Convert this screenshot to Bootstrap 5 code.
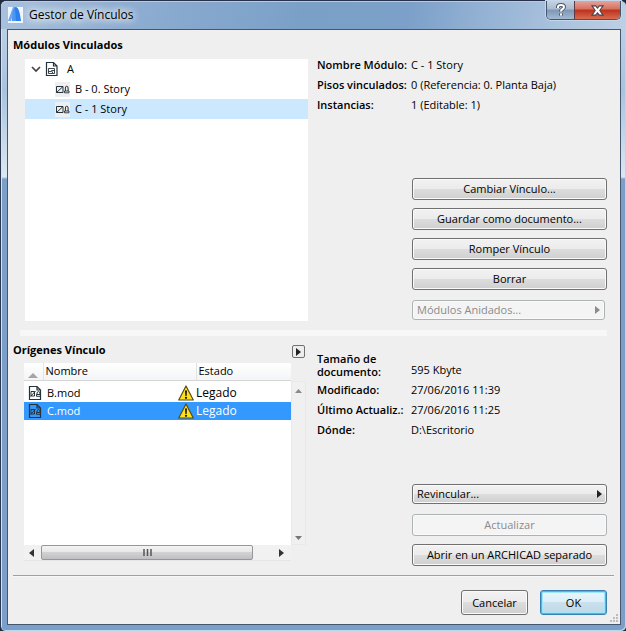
<!DOCTYPE html>
<html lang="es">
<head>
<meta charset="utf-8">
<meta name="viewport" content="width=device-width, initial-scale=1">
<title>Gestor de Vínculos</title>
<link href="https://cdn.jsdelivr.net/npm/bootstrap@5.3.0/dist/css/bootstrap.min.css" rel="stylesheet">
<style>
body{font-family:"Open Sans","Noto Sans",sans-serif;font-size:11px;line-height:20px;color:#000;background:#1f2a3d}
svg{display:block;flex:none}
h1,h2{font-size:11px;line-height:16px;margin:0}
h2{font-weight:700}
.win{min-height:100vh;padding:0 5px 6px 6px;border-top:1px solid #27324a;border-left:1px solid #2c3850;border-radius:6px 6px 5px 5px;
 background:linear-gradient(#c3d5e8 0,#a9c3de 90px,#dce7f2 176px,#7c9fc7 178px,#7b9fc8 100%);box-shadow:inset 1px 1px #d3e3f2,inset -1px -1px #b5d9ea}
.titlebar{height:28px;margin:0 -5px 0 -6px;padding:0 5px 0 6px;border-radius:6px 6px 0 0;background:linear-gradient(100deg,#a9c1dc 0,#8eadd1 20%,#7ba0c8 48%,#7ca0c9 65%,#9db9d8 82%,#bdd0e5 100%);box-shadow:inset 0 1px #b7cce3}
.titlebar h1{font-size:12px;font-weight:400;padding-left:5px;text-shadow:0 0 8px #fff,0 0 8px #fff,0 0 12px #fff}
.caption-buttons{height:19px;border:1px solid #46546b;border-top:0;border-radius:0 0 5px 5px;overflow:hidden;box-shadow:0 0 0 1px #c5d7e9}
.cap{border:0;padding:0;height:18px;display:flex;align-items:center;justify-content:center}
.cap-help{width:27px;background:linear-gradient(#c6d2e1 0,#a9bbd0 45%,#7e96b4 50%,#a4bad3 100%)}
.cap-close{width:46px;border-left:1px solid #5f3b42;background:linear-gradient(#e4a498 0,#d6705e 45%,#bd311b 50%,#d76c50 100%)}
.client{min-height:596px;border:1px solid #45576e;background:#efefef;padding:7px 6px 9px 5px}
.upper{display:grid;grid-template-columns:minmax(0,1fr) 290px;column-gap:9px;padding-right:7px}
.tree{margin:6px 0 0 12px;min-height:262px;background:#fff}
.tree button,.tree .branch{display:flex;align-items:center;width:100%;height:20px;border:0;background:none;padding:0 0 0 30px;color:#000}
.tree .branch{padding-left:6px}
.tree .selected{background:#cce8ff}
.item-ico{background:#efefef;margin-right:5px}
.facts{display:grid;grid-template-columns:94px 1fr;margin:0}
.facts dt,.facts dd{margin:0;line-height:20px;white-space:nowrap}
.facts dt{font-weight:600}
.facts-top{padding-top:18px}
.facts-file{padding-top:8px}
.facts .tall{line-height:13px;white-space:normal;padding:2px 0}
.facts .tall+dd{padding-top:10px}
.winbtn{height:22px;padding:0 4px;font-size:11px;line-height:18px;color:#000;border:1px solid #707070;border-radius:3px;background:linear-gradient(#f2f2f2 0,#ebebeb 49%,#dddddd 50%,#cfcfcf 100%);box-shadow:inset 0 0 0 1px #fafafa}
.winbtn:disabled{opacity:1;color:#8b8b8b;border-color:#adb2b5;background:#f4f4f4}
.short{height:20px}
.actions{width:195px;margin-left:auto;gap:8px}
.actions-top{padding-bottom:1px}
.nested{margin:2px 2px 0 0}
.relink{margin-bottom:2px}
.dialog-btn{width:67px;height:25px}
.default-btn{border-color:#3c7fb1;background:linear-gradient(#eaf6fb 0,#dceef7 49%,#c9e1ee 50%,#c0d8e5 100%);box-shadow:inset 0 0 0 1px #28c8f5,inset 0 0 0 2px #9ee6fa}
.splitter{height:6px;margin:9px 7px 6px 7px;background:#f7f7f7}
.popbtn{width:13px;height:13px;padding:0;margin-right:3px;border:1px solid #707070;border-radius:2px;background:#eee;display:flex;align-items:center;justify-content:center}
.sources{display:grid;grid-template-columns:minmax(0,1fr) 15px;margin:5px 2px 5px 11px}
.filelist{background:#fff;min-height:182px}
.filelist table{width:100%;table-layout:fixed;border-collapse:collapse}
.filelist th{height:17px;line-height:16px;padding:0;font-weight:400;background:linear-gradient(#fff,#f3f4f6);border-bottom:1px solid #d5d5d5}
.filelist th+th{border-left:1px solid #e2e2e2;padding-left:2px}
.filelist td{height:18px;line-height:18px;padding:0}
.filelist tbody::before{content:"";display:block;height:3px}
.filelist .selected{background:#3399ff;color:#fff}
.status-text{font-size:12px}
.vbar{margin-top:18px;padding:7px 0 4px;border:1px solid #e9e9e9;background:#f0f0f0}
.hbar{height:16px;padding:0 7px 0 5px;background:#f1f1f1;border-bottom:1px solid #e5e5e5}
.scroll-arrow{border:0;background:none;padding:0;line-height:0}
.thumb{height:15px;width:212px;margin:0 auto 0 7px;border:1px solid #979797;border-radius:2px;background:linear-gradient(#f4f4f4 0,#e6e6e7 49%,#d2d2d4 50%,#bfbfc3 100%)}
.rule{height:2px;background:#a0a0a0;border-bottom:1px solid #f7f7f7;margin-top:9px}
.footer-row{padding:13px 7px 0 0;gap:12px;position:relative}
.grip{position:absolute;right:-4px;bottom:-8px}
</style>
<script src="https://cdn.jsdelivr.net/npm/bootstrap@5.3.0/dist/js/bootstrap.bundle.min.js"></script>
</head>
<body>
<svg width="0" height="0" class="position-absolute" aria-hidden="true">
<symbol id="story" viewBox="0 0 15 15"><g fill="none" stroke="#26323a"><path d="M1.500 4.500h6.500v6h-6.500zM1.500 10.500l6.500-6"/><path d="M9.500 9h4.500v1.800H9.500z" stroke-width=".9"/><path d="M10.400 9V6q0-1.800 1.350-1.800T13.100 6v3"/></g></symbol>
<symbol id="modfile" viewBox="0 0 14 16"><path d="M1.500 1.500h7.500l3.500 3.500v9.500h-11zM9 1.500V5h3.500" fill="none" stroke="#26323a" stroke-width="1.200"/><path d="M3 6.500h3.500v4.500H3zM2.500 11.500l5-5.500M8.500 9.500h4v1.800h-4zM9 9.500V7.500q1.500-1.800 3 0v2" fill="none" stroke="#26323a"/></symbol>
<symbol id="warning" viewBox="0 0 16 16"><path d="M8 1L15.300 15H.7z" fill="#ffe11b" stroke="#544c16" stroke-width="1.200" stroke-linejoin="round"/><path d="M7 5.500h2L8.600 11H7.400z" fill="#111"/><circle cx="8" cy="12.800" r="1.100" fill="#111"/></symbol>
</svg>
<main class="win d-flex flex-column">
<header class="titlebar d-flex align-items-start">
<div class="d-flex align-items-center h-100">
<svg width="17" height="16" viewBox="0 0 17 16" aria-hidden="true"><path d="M1 0h15v16H1z" fill="#f0f6fc"/><path d="M1 14L6 0h2L4 14z" fill="#69a6f5"/><path d="M5 14C5.500 5 7 0 8.500 0C12 0 13 7 14 14z" fill="#2c80ed"/><path d="M5 14C5.500 5 7 1 8 1L9 14z" fill="#4e96f1"/></svg>
<h1>Gestor de Vínculos</h1>
</div>
<div class="caption-buttons d-flex ms-auto">
<button class="cap cap-help" type="button" aria-label="Ayuda"><svg width="12" height="14" viewBox="0 0 12 14"><path d="M3 5V4q0-2 3-2t3 2q0 1.500-2 2.500Q6 7 6 8.500M6 10.500v2" fill="none" stroke="#4b566a" stroke-width="4"/><path d="M3 5V4q0-2 3-2t3 2q0 1.500-2 2.500Q6 7 6 8.500M6 10.500v2" fill="none" stroke="#fff" stroke-width="2"/></svg></button>
<button class="cap cap-close" type="button" aria-label="Cerrar"><svg width="13" height="11" viewBox="0 0 14 12"><path d="M1 1h4l2 2.500L9 1h4L9.500 6 13 11H9L7 8.500 5 11H1L4.500 6z" fill="#fff" stroke="#54434d" stroke-width="1.200"/></svg></button>
</div>
</header>
<div class="client flex-grow-1 d-flex flex-column">
<section class="upper">
<div class="d-flex flex-column">
<h2>Módulos Vinculados</h2>
<ul class="tree list-unstyled mb-0 flex-grow-1">
<li><button class="branch" type="button" aria-expanded="true"><svg width="10" height="8" viewBox="0 0 10 8"><path d="M1 2l4 4 4-4" fill="none" stroke="#444" stroke-width="1.700"/></svg><svg class="ms-1 me-2" width="14" height="16" viewBox="0 0 14 16"><path d="M1.500 1.500h7l3.500 3.500v9.500H1.500zM8.500 1.500V5H12" fill="none" stroke="#26323a" stroke-width="1.200"/><path d="M3.500 7.500h6v5h-6zM3.500 10.500h3v-1h3M7.500 12v-1.500" fill="none" stroke="#26323a" stroke-width=".9"/></svg>A</button></li>
<li><button type="button"><svg class="item-ico" width="15" height="15"><use href="#story"/></svg>B - 0. Story</button></li>
<li><button class="selected" type="button"><svg class="item-ico" width="15" height="15"><use href="#story"/></svg>C - 1 Story</button></li>
</ul>
</div>
<div class="d-flex flex-column">
<dl class="facts facts-top">
<dt>Nombre Módulo:</dt><dd>C - 1 Story</dd>
<dt>Pisos vinculados:</dt><dd>0 (Referencia: 0. Planta Baja)</dd>
<dt>Instancias:</dt><dd>1 (Editable: 1)</dd>
</dl>
<div class="actions actions-top d-flex flex-column mt-auto">
<button class="btn winbtn" type="button">Cambiar Vínculo...</button>
<button class="btn winbtn" type="button">Guardar como documento...</button>
<button class="btn winbtn" type="button">Romper Vínculo</button>
<button class="btn winbtn" type="button">Borrar</button>
<button class="btn winbtn short nested d-flex align-items-center justify-content-between" type="button" disabled>Módulos Anidados...<svg width="5" height="8" viewBox="0 0 5 8"><path d="M0 0l5 4-5 4z" fill="#8b8b8b"/></svg></button>
</div>
</div>
</section>
<div class="splitter"></div>
<section class="upper flex-grow-1">
<div class="d-flex flex-column">
<div class="d-flex justify-content-between align-items-end"><h2>Orígenes Vínculo</h2>
<button class="popbtn" type="button" aria-label="Opciones de origen"><svg width="5" height="8" viewBox="0 0 5 8"><path d="M0 0l5 4-5 4z" fill="#222"/></svg></button></div>
<div class="sources flex-grow-1">
<div class="filelist">
<table>
<colgroup><col width="19"><col width="135"><col width="18"><col></colgroup>
<thead><tr><th scope="col" aria-label="Tipo"><svg class="mx-auto mt-2" width="10" height="5" viewBox="0 0 10 5"><path d="M5 0l5 5H0z" fill="#a5a5a5"/></svg></th><th scope="col" colspan="2">Nombre</th><th scope="col">Estado</th></tr></thead>
<tbody>
<tr><td><svg class="ms-1" width="14" height="16"><use href="#modfile"/></svg></td><td class="ps-1">B.mod</td><td><svg width="16" height="16"><use href="#warning"/></svg></td><td class="status-text">Legado</td></tr>
<tr class="selected"><td><svg class="ms-1" width="14" height="16"><use href="#modfile"/></svg></td><td class="ps-1">C.mod</td><td><svg width="16" height="16"><use href="#warning"/></svg></td><td class="status-text">Legado</td></tr>
</tbody>
</table>
</div>
<div class="vbar d-flex flex-column justify-content-between align-items-center">
<button class="scroll-arrow" type="button" aria-label="Subir"><svg width="7" height="4" viewBox="0 0 7 4"><path d="M3.500 0L7 4H0z" fill="#8a8a8a"/></svg></button>
<button class="scroll-arrow" type="button" aria-label="Bajar"><svg width="7" height="4" viewBox="0 0 7 4"><path d="M3.500 4L7 0H0z" fill="#777"/></svg></button>
</div>
<div class="hbar d-flex align-items-center">
<button class="scroll-arrow" type="button" aria-label="Izquierda"><svg width="5" height="8" viewBox="0 0 5 8"><path d="M5 0L0 4l5 4z" fill="#333"/></svg></button>
<div class="thumb d-flex align-items-center justify-content-center"><svg width="9" height="7" viewBox="0 0 9 7"><path d="M1 0v7M4.500 0v7M8 0v7" stroke="#555" stroke-width="1.500"/></svg></div>
<button class="scroll-arrow" type="button" aria-label="Derecha"><svg width="5" height="8" viewBox="0 0 5 8"><path d="M0 0l5 4-5 4z" fill="#333"/></svg></button>
</div>
</div>
</div>
<div class="d-flex flex-column">
<dl class="facts facts-file">
<dt class="tall">Tamaño de documento:</dt><dd>595 Kbyte</dd>
<dt>Modificado:</dt><dd>27/06/2016 11:39</dd>
<dt>Último Actualiz.:</dt><dd>27/06/2016 11:25</dd>
<dt>Dónde:</dt><dd>D:\Escritorio</dd>
</dl>
<div class="actions d-flex flex-column mt-auto">
<button class="btn winbtn short relink d-flex align-items-center justify-content-between" type="button">Revincular...<svg width="5" height="8" viewBox="0 0 5 8"><path d="M0 0l5 4-5 4z" fill="#222"/></svg></button>
<button class="btn winbtn" type="button" disabled>Actualizar</button>
<button class="btn winbtn" type="button">Abrir en un ARCHICAD separado</button>
</div>
</div>
</section>
<div class="rule"></div>
<footer class="footer-row d-flex justify-content-end">
<button class="btn winbtn dialog-btn" type="button">Cancelar</button>
<button class="btn winbtn dialog-btn default-btn" type="button">OK</button>
<svg class="grip" width="9" height="9" viewBox="0 0 9 9" aria-hidden="true"><path d="M7 0h2v2H7zM4 3h2v2H4zM7 3h2v2H7zM1 6h2v2H1zM4 6h2v2H4zM7 6h2v2H7z" fill="#bcbcbc"/></svg>
</footer>
</div>
</main>
</body>
</html>
